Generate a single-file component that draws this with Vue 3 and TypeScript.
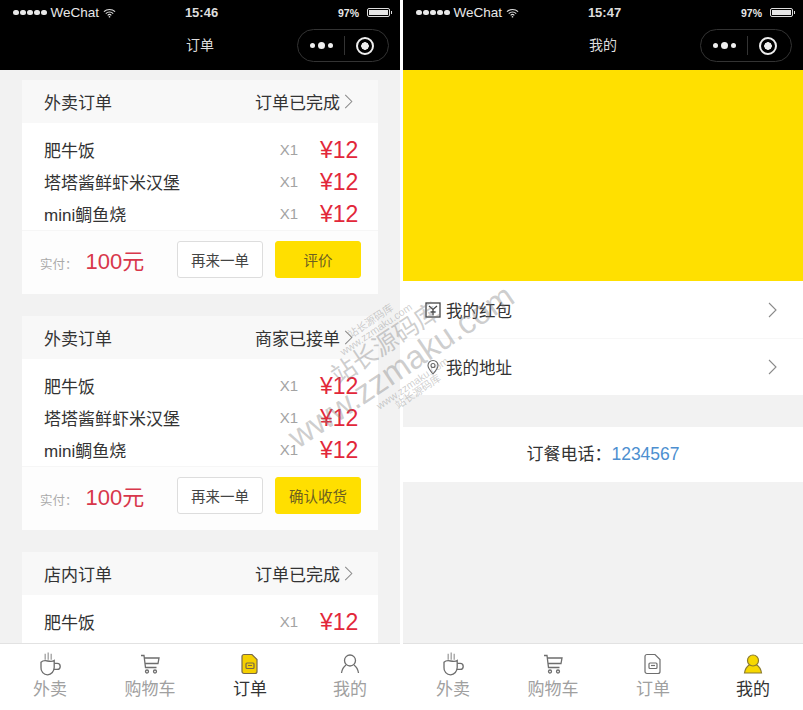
<script setup lang="ts">
interface Order {
  kind: string;
  status: string;
  action: string;
  foods: string[];
}

const allFoods = ["肥牛饭", "塔塔酱鲜虾米汉堡", "mini鲷鱼烧"];

// the last card runs under the tab bar, only its first row shows
const orders: Order[] = [
  { kind: "外卖订单", status: "订单已完成", action: "评价", foods: allFoods },
  { kind: "外卖订单", status: "商家已接单", action: "确认收货", foods: allFoods },
  { kind: "店内订单", status: "订单已完成", action: "", foods: allFoods.slice(0, 1) },
];

const tabs = ["外卖", "购物车", "订单", "我的"];
</script>

<template>
  <div class="screens">
    <!-- 订单 -->
    <section class="phone">
      <header class="top">
        <div class="status">
          <span class="carrier">
            <span class="dots"><i v-for="n in 5" :key="n"></i></span>WeChat
            <svg viewBox="0 0 14 10" width="13" height="10"><path d="M1 3.6a8.6 8.6 0 0 1 12 0M3 5.6a5.7 5.7 0 0 1 8 0M5 7.5a2.9 2.9 0 0 1 4 0" fill="none" stroke="#ddd" stroke-width="1.2" /><circle cx="7" cy="9" r=".9" fill="#ddd" /></svg>
          </span>
          <span class="time">15:46</span>
          <span class="power">97%<b class="battery"><b class="battery-fill"></b></b></span>
        </div>
        <div class="nav">
          <span class="title">订单</span>
          <div class="capsule">
            <span class="more"><i></i><i class="mid"></i><i></i></span>
            <span class="sep"></span>
            <span class="target"></span>
          </div>
        </div>
      </header>

      <main class="list">
        <article v-for="(o, i) in orders" :key="i" class="card">
          <div class="card-head">
            <span>{{ o.kind }}</span>
            <span class="state">{{ o.status }}<svg viewBox="0 0 9 16" width="9" height="15"><path d="M1 1l7 7-7 7" fill="none" stroke="#8a8a8a" stroke-width="1.1" /></svg></span>
          </div>
          <div class="foods">
            <div v-for="f in o.foods" :key="f" class="food">
              <span class="food-name">{{ f }}</span>
              <span class="qty">X1</span>
              <span class="price">¥12</span>
            </div>
          </div>
          <div v-if="o.action" class="card-foot">
            <div class="paid-wrap">
              <span class="paid-label">实付：</span>
              <span class="paid">100元</span>
            </div>
            <button class="btn">再来一单</button>
            <button class="btn btn-main">{{ o.action }}</button>
          </div>
        </article>
      </main>

      <nav class="tabbar">
        <div v-for="(t, i) in tabs" :key="t" class="tab" :class="{ on: i === 2 }">
          <svg v-if="i === 0" viewBox="2 2 20 20" width="24" height="24" fill="none" stroke="#6e6e6e" stroke-width="1.1"><path d="M8 8.5V3.5M10.5 8.5V2.5M13 8.5V3.5" stroke="#a0a0a0" /><path d="M4.5 10.5c1.500-1.400 3-1.600 5.500-1s4.500.4 5.500-.4v5.900a6 6 0 0 1-5.500 6 5.500 5.500 0 0 1-5.500-6z" /><path d="M15.5 11.5h2.500a2.200 2.200 0 0 1 0 5h-3" /></svg>
          <svg v-else-if="i === 1" viewBox="0 0 24 24" width="24" height="24" fill="none" stroke="#6e6e6e" stroke-width="1.3"><path d="M3 3.5h3l1.500 12h11M6.5 6h14.500l-1 5.500H7.200" /><circle cx="9" cy="19.5" r="1.5" /><circle cx="17" cy="19.5" r="1.5" /></svg>
          <svg v-else-if="i === 2" viewBox="0 0 24 24" width="24" height="24"><path d="M6 2.5h8l5 5v12a2 2 0 0 1-2 2H6a2 2 0 0 1-2-2v-15a2 2 0 0 1 2-2z" fill="#f5d000" stroke="#77684a" stroke-width="1.2" /><rect x="8" y="11" width="8" height="5.5" rx="1" fill="none" stroke="#77684a" stroke-width="1.2" /><path d="M10 13.5h4" stroke="#77684a" /></svg>
          <svg v-else viewBox="0 0 24 24" width="24" height="24" fill="none" stroke="#6e6e6e" stroke-width="1.3"><circle cx="12" cy="8.5" r="5.5" /><path d="M8 13c-2 1.500-4 4.500-4.500 8M16 13c2 1.500 4 4.500 4.500 8" /></svg>
          <span class="tab-label">{{ t }}</span>
        </div>
      </nav>
    </section>

    <!-- 我的 -->
    <section class="phone">
      <header class="top">
        <div class="status">
          <span class="carrier">
            <span class="dots"><i v-for="n in 5" :key="n"></i></span>WeChat
            <svg viewBox="0 0 14 10" width="13" height="10"><path d="M1 3.6a8.6 8.6 0 0 1 12 0M3 5.6a5.7 5.7 0 0 1 8 0M5 7.5a2.9 2.9 0 0 1 4 0" fill="none" stroke="#ddd" stroke-width="1.2" /><circle cx="7" cy="9" r=".9" fill="#ddd" /></svg>
          </span>
          <span class="time">15:47</span>
          <span class="power">97%<b class="battery"><b class="battery-fill"></b></b></span>
        </div>
        <div class="nav">
          <span class="title">我的</span>
          <div class="capsule">
            <span class="more"><i></i><i class="mid"></i><i></i></span>
            <span class="sep"></span>
            <span class="target"></span>
          </div>
        </div>
      </header>

      <main class="mine">
        <div class="banner"></div>
        <div class="menu">
          <svg viewBox="0 0 16 16" width="16" height="16" fill="none" stroke="#444" stroke-width="1.3"><rect x="1" y="1" width="14" height="14" /><path d="M4 4l4 3.5 4-3.500M8 7.5v6M5.5 10h5" /></svg>
          <span>我的红包</span>
          <svg class="menu-arrow" viewBox="0 0 9 16" width="9" height="16"><path d="M1 1l7 7-7 7" fill="none" stroke="#8a8a8a" stroke-width="1.1" /></svg>
        </div>
        <div class="menu">
          <svg viewBox="0 0 16 16" width="16" height="16" fill="none" stroke="#666" stroke-width="1.1"><path d="M8 15c-3-3.500-5-6-5-8.500a5 5 0 0 1 10 0c0 2.500-2 5-5 8.500z" /><circle cx="8" cy="6.5" r="2" /></svg>
          <span>我的地址</span>
          <svg class="menu-arrow" viewBox="0 0 9 16" width="9" height="16"><path d="M1 1l7 7-7 7" fill="none" stroke="#8a8a8a" stroke-width="1.1" /></svg>
        </div>
        <div class="phone-line">订餐电话：<span class="tel">1234567</span></div>
      </main>

      <nav class="tabbar">
        <div v-for="(t, i) in tabs" :key="t" class="tab" :class="{ on: i === 3 }">
          <svg v-if="i === 0" viewBox="2 2 20 20" width="24" height="24" fill="none" stroke="#6e6e6e" stroke-width="1.1"><path d="M8 8.5V3.5M10.5 8.5V2.5M13 8.5V3.5" stroke="#a0a0a0" /><path d="M4.5 10.5c1.500-1.400 3-1.600 5.500-1s4.500.4 5.500-.4v5.900a6 6 0 0 1-5.500 6 5.500 5.500 0 0 1-5.500-6z" /><path d="M15.5 11.5h2.500a2.200 2.200 0 0 1 0 5h-3" /></svg>
          <svg v-else-if="i === 1" viewBox="0 0 24 24" width="24" height="24" fill="none" stroke="#6e6e6e" stroke-width="1.3"><path d="M3 3.5h3l1.500 12h11M6.5 6h14.500l-1 5.500H7.200" /><circle cx="9" cy="19.5" r="1.5" /><circle cx="17" cy="19.5" r="1.5" /></svg>
          <svg v-else-if="i === 2" viewBox="0 0 24 24" width="24" height="24" fill="none" stroke="#6e6e6e" stroke-width="1.2"><path d="M6 2.5h8l5 5v12a2 2 0 0 1-2 2H6a2 2 0 0 1-2-2v-15a2 2 0 0 1 2-2z" /><rect x="8" y="11" width="8" height="5.5" rx="1" /><path d="M10 13.5h4" /></svg>
          <svg v-else viewBox="0 0 24 24" width="24" height="24"><path d="M8 13c-2 1.500-4 4.500-4.500 8h17c-.5-3.500-2.500-6.500-4.500-8z" fill="#f7d800" stroke="#8a7a30" stroke-width="1.2" /><circle cx="12" cy="8.5" r="5.5" fill="#f7d800" stroke="#8a7a30" stroke-width="1.2" /></svg>
          <span class="tab-label">{{ t }}</span>
        </div>
      </nav>
    </section>

    <div class="watermark">
      <div class="stamp"><span>站长源码库</span><span>www.zzmaku.com</span></div>
      <span class="mark-cn">站长源码库</span>
      <span class="mark-url">www.zzmaku.com</span>
      <div class="stamp"><span>www.zzmaku.com</span><span>站长源码库</span></div>
    </div>
  </div>
</template>

<style scoped>
.screens {
  position: relative;
  display: flex;
  gap: 3px;
  width: 803px;
  height: 710px;
  overflow: hidden;
  background: #fff;
  font-family: "Liberation Sans", "Noto Sans CJK SC", sans-serif;
  color: #333;
}

.phone {
  flex: 0 0 400px;
  display: flex;
  flex-direction: column;
  height: 710px;
  overflow: hidden;
  background: #f2f2f2;
}

.top {
  flex: 0 0 70px;
  background: #000;
  color: #e8e8e8;
}

.status {
  display: grid;
  grid-template-columns: 1fr auto 1fr;
  align-items: center;
  height: 25px;
  padding: 0 10px 0 13px;
  font-size: 13.5px;
}

.carrier {
  display: flex;
  align-items: center;
  gap: 4px;
}

.dots {
  display: flex;
  gap: 1.5px;
}

.dots i {
  width: 5.5px;
  height: 5.5px;
  border-radius: 50%;
  background: #e8e8e8;
}

.time {
  font-size: 13px;
  font-weight: 700;
  color: #ddd;
}

.power {
  display: flex;
  justify-content: flex-end;
  align-items: center;
  gap: 8px;
  font-weight: 700;
  font-size: 10.5px;
}

.battery {
  position: relative;
  display: block;
  width: 23px;
  height: 9px;
  border: 1px solid #ddd;
  border-radius: 2px;
  padding: 1px;
  box-sizing: border-box;
}

.battery::after {
  content: "";
  position: absolute;
  right: -3px;
  top: 2px;
  width: 1.5px;
  height: 3px;
  background: #ddd;
}

.battery-fill {
  display: block;
  height: 100%;
  background: #e6e6e6;
}

.nav {
  display: flex;
  justify-content: flex-end;
  align-items: center;
  position: relative;
  height: 45px;
  padding-right: 11px;
}

.title {
  position: absolute;
  left: 0;
  right: 0;
  top: 9px;
  text-align: center;
  font-size: 14px;
  color: #ddd;
}

.capsule {
  display: flex;
  align-items: center;
  justify-content: space-between;
  box-sizing: border-box;
  width: 92px;
  height: 33px;
  margin-top: -4px;
  padding: 0 14px 0 12px;
  border: 1px solid #333;
  border-radius: 17px;
}

.more {
  display: flex;
  align-items: center;
  gap: 3px;
}

.more i {
  width: 5px;
  height: 5px;
  border-radius: 50%;
  background: #eee;
}

.more .mid {
  width: 7px;
  height: 7px;
}

.sep {
  width: 1px;
  height: 19px;
  background: #333;
}

.target {
  box-sizing: border-box;
  width: 18px;
  height: 18px;
  border: 2px solid #eee;
  border-radius: 50%;
  background: radial-gradient(circle, #eee 0 3.5px, #000 4px);
}

.list {
  flex: 1;
  min-height: 0;
  overflow: hidden;
  padding: 10px 22px 0;
}

.card {
  margin-bottom: 22px;
  background: #fff;
}

.card-head {
  display: flex;
  justify-content: space-between;
  align-items: center;
  height: 43px;
  padding: 0 25px 0 22px;
  background: #f8f8f8;
  font-size: 17px;
}

.state {
  display: flex;
  align-items: center;
  gap: 4px;
}

.foods {
  padding-top: 11px;
  height: 96px;
}

.food {
  display: flex;
  align-items: center;
  height: 32px;
  padding: 0 21px 0 22px;
  font-size: 17px;
}

.food-name {
  flex: 1;
  padding-bottom: 2px;
}

.qty {
  margin-right: 22px;
  padding-bottom: 2px;
  font-size: 15px;
  color: #a3a3a3;
}

.price {
  width: 37px;
  font-size: 23px;
  color: #e2273a;
  white-space: nowrap;
}

.card-foot {
  display: flex;
  align-items: center;
  box-sizing: border-box;
  height: 64px;
  padding: 0 17px 6px 18px;
  border-top: 1px solid #f6f6f6;
  background: #fdfdfd;
}

.paid-wrap {
  flex: 1;
  display: flex;
  align-items: baseline;
  gap: 8px;
  margin-top: -2px;
}

.paid-label {
  font-size: 12.5px;
  color: #aaa;
}

.paid {
  font-size: 22px;
  color: #d8374b;
}

.btn {
  box-sizing: border-box;
  width: 86px;
  height: 37px;
  margin-left: 12px;
  border: 1px solid #ddd;
  border-radius: 3px;
  background: #fff;
  color: #444;
  font: 14.5px "Liberation Sans", "Noto Sans CJK SC", sans-serif;
}

.btn-main {
  border-color: #ffdf00;
  background: #ffdf00;
  color: #6c6020;
}

.tabbar {
  flex: 0 0 67px;
  display: grid;
  grid-template-columns: repeat(4, 1fr);
  box-sizing: border-box;
  border-top: 1px solid #e2e2e2;
  background: #fff;
}

.tab {
  display: flex;
  flex-direction: column;
  align-items: center;
  padding-top: 8px;
  font-size: 17px;
  color: #a0a0a0;
}

.tab.on {
  color: #333;
}

.tab-label {
  margin-top: 3px;
  line-height: 22px;
}

.mine {
  flex: 1;
  min-height: 0;
}

.banner {
  height: 211px;
  background: #ffe000;
}

.menu {
  display: flex;
  align-items: center;
  gap: 5px;
  height: 57px;
  padding: 0 26px 0 22px;
  border-bottom: 1px solid #f7f7f7;
  background: #fff;
  font-size: 16.5px;
}

.menu + .menu {
  height: 56px;
  border-bottom: 0;
}

.menu-arrow {
  margin-left: auto;
}

.phone-line {
  height: 55px;
  margin-top: 32px;
  background: #fff;
  font-size: 17px;
  line-height: 55px;
  text-align: center;
}

.tel {
  color: #4d8fd0;
  font-size: 17.5px;
}

.watermark {
  position: absolute;
  left: 394px;
  top: 356px;
  display: flex;
  flex-direction: column;
  align-items: center;
  transform: translate(-50%, -50%) rotate(-34deg);
  color: rgba(125, 125, 125, 0.38);
  white-space: nowrap;
  pointer-events: none;
}

.stamp {
  display: flex;
  flex-direction: column;
  align-items: center;
  font-size: 10.5px;
  line-height: 10px;
}

.mark-cn {
  font-size: 25px;
  line-height: 25px;
}

.mark-url {
  font-size: 33px;
  line-height: 30px;
}
</style>
